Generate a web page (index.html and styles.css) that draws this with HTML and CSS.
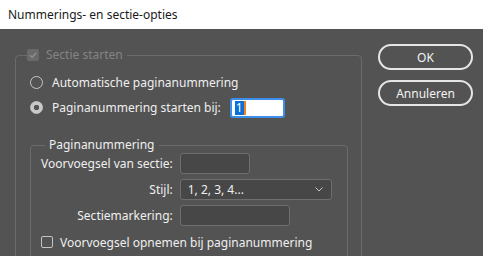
FILE: index.html
```html
<!DOCTYPE html>
<html lang="nl">
<head>
<meta charset="utf-8">
<title>Nummerings- en sectie-opties</title>
<link rel="stylesheet" href="styles.css">
</head>
<body>
<div class="titlebar">Nummerings- en sectie-opties</div>
<div class="dialog">
  <fieldset class="group outer">
    <legend class="legend-check"><span class="check disabled"><svg viewBox="0 0 12 12" width="12" height="12"><path d="M3 6.2 L5.2 8.3 L9.2 3.8" fill="none" stroke="#8c8c8c" stroke-width="1.5"/></svg></span><span class="disabled-text">Sectie starten</span></legend>
    <div class="radio-row"><span class="radio"></span><span>Automatische paginanummering</span></div>
    <div class="radio-row"><span class="radio on"></span><span>Paginanummering starten bij:</span><span class="field focus"><span class="sel">1</span><span class="caret"></span></span></div>
    <fieldset class="group inner">
      <legend class="legend-text">Paginanummering</legend>
      <div class="form-grid">
        <span class="lbl">Voorvoegsel van sectie:</span><span class="field w70"></span>
        <span class="lbl">Stijl:</span><span class="field select w152"><span>1, 2, 3, 4...</span><svg class="chev" viewBox="0 0 8 5" width="8" height="5"><path d="M0.5 0.5 L4 4 L7.5 0.5" fill="none" stroke="#c8c8c8" stroke-width="1"/></svg></span>
        <span class="lbl">Sectiemarkering:</span><span class="field w110"></span>
      </div>
      <div class="check-row"><span class="check"></span><span>Voorvoegsel opnemen bij paginanummering</span></div>
    </fieldset>
  </fieldset>
  <div class="buttons">
    <button class="btn">OK</button>
    <button class="btn">Annuleren</button>
  </div>
</div>
</body>
</html>
```
FILE: styles.css
```css
* { box-sizing: border-box; }
html, body { margin: 0; padding: 0; }
body {
  width: 483px;
  height: 256px;
  overflow: hidden;
  background: #535353;
  font-family: "Noto Sans", "Open Sans", sans-serif;
  font-size: 12px;
  color: #efefef;
}
.titlebar {
  height: 29px;
  background: #ffffff;
  color: #1a1a1a;
  padding-left: 8px;
  line-height: 29px;
  font-size: 12px;
}
.dialog {
  display: flex;
  align-items: flex-start;
  padding: 0 0 0 15px;
}
.group {
  margin: 0;
  border: 1px solid #6b6b6b;
  border-radius: 4px;
  min-width: 0;
}
.outer {
  width: 347px;
  margin-top: 19px;
  padding: 8px 0 20px 14px;
  height: 260px;
}
.legend-check {
  display: flex;
  align-items: center;
  gap: 7px;
  padding: 0 4px 0 0;
  margin-left: -3px;
  line-height: 14px;
}
.legend-text {
  padding: 0 4px 0 4px;
  margin-left: 4px;
  line-height: 14px;
}
.disabled-text { color: #848484; }
.check {
  width: 12px;
  height: 12px;
  border: 1px solid #c4c4c4;
  border-radius: 2px;
  display: inline-block;
  flex: none;
}
.check.disabled {
  background: #6a6a6a;
  border-color: #6a6a6a;
}
.check svg { display: block; margin: -1px; }
.radio-row {
  display: flex;
  align-items: center;
  height: 25px;
  gap: 9px;
  padding-left: 0;
}
.radio {
  width: 13px;
  height: 13px;
  border: 1.5px solid #c8c8c8;
  border-radius: 50%;
  flex: none;
}
.radio.on {
  background: radial-gradient(circle, #555555 0 2.5px, #c8c8c8 3px);
}
.field {
  display: inline-flex;
  align-items: center;
  height: 21px;
  background: #474747;
  border: 1px solid #6e6e6e;
  border-radius: 3px;
}
.field.focus {
  background: #ffffff;
  border: 2px solid #3d8ee8;
  width: 55px;
  height: 20px;
  margin-left: 0;
  padding-left: 3px;
  color: #fff;
}
.sel {
  background: #0a6fd6;
  color: #fff;
  line-height: 14px;
  padding: 0 1px;
}
.caret {
  width: 2px;
  height: 14px;
  background: #f08020;
}
.inner {
  width: 318px;
  margin-top: 18px;
  margin-left: 0;
  padding: 1px 0 10px 10px;
}
.form-grid {
  display: grid;
  grid-template-columns: auto auto;
  justify-content: start;
  justify-items: start;
  align-items: center;
  column-gap: 7px;
  row-gap: 5px;
  margin-top: 0;
}
.lbl { justify-self: end; }
.w70 { width: 70px; }
.w110 { width: 110px; }
.w152 { width: 152px; }
.select {
  justify-content: space-between;
  padding: 0 8px 0 7px;
  height: 21px;
}
.chev { display: block; }
.check-row {
  display: flex;
  align-items: center;
  gap: 7px;
  margin-top: 5px;
  height: 22px;
}
.buttons {
  display: flex;
  flex-direction: column;
  gap: 10px;
  margin-left: 16px;
  margin-top: 15px;
}
.btn {
  width: 95px;
  height: 26px;
  border: 2px solid #e6e6e6;
  border-radius: 13px;
  background: transparent;
  color: #f2f2f2;
  font-family: "Noto Sans", "Open Sans", sans-serif;
  font-size: 12px;
  padding: 0;
}
```
